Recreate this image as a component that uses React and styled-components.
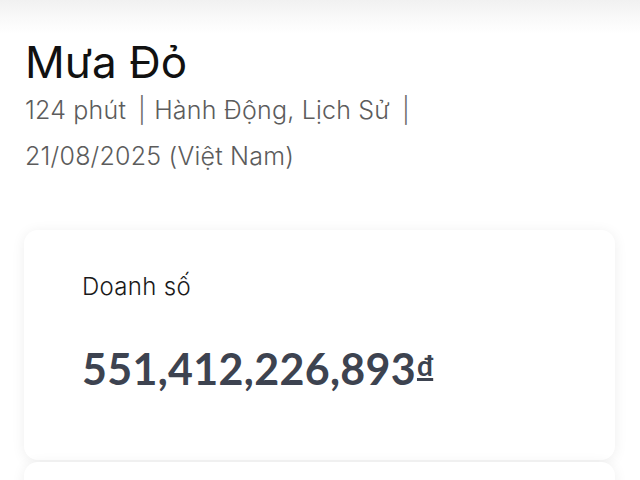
import React from "react";
import styled, { createGlobalStyle } from "styled-components";

const Global = createGlobalStyle`
  html, body { margin: 0; padding: 0; background: #ffffff; }
  body { font-family: Inter, "Noto Sans", sans-serif; }
`;

const Page = styled.div`
  width: 640px;
  height: 480px;
  overflow: hidden;
  background: #ffffff;
  display: flex;
  flex-direction: column;
`;

const TopShade = styled.div`
  height: 34px;
  flex: none;
  background: linear-gradient(to bottom, #f1f1f1 0%, #f8f8f8 45%, #ffffff 100%);
`;

const Info = styled.section`
  padding: 0 26px 0 25px;
  display: flex;
  flex-direction: column;
`;

const Title = styled.h1`
  margin: 0;
  font-size: 44px;
  font-weight: 400;
  line-height: 56px;
  color: #111111;
`;

const MetaLine = styled.div`
  display: flex;
  align-items: baseline;
  font-size: 25px;
  letter-spacing: 0.2px;
  line-height: 48px;
  color: #5c5c5c;
  font-weight: 300;
  white-space: nowrap;
  margin-top: ${(p) => (p.$first ? "-4px" : "-2px")};
`;

const Sep = styled.span`
  margin: 0 8px 0 12px;
  color: #6a6a6a;
`;

const Cards = styled.div`
  margin-top: 50px;
  padding: 0 25px 0 24px;
  display: flex;
  flex-direction: column;
  gap: 2px;
`;

const Card = styled.div`
  background: #ffffff;
  border-radius: 14px;
  box-shadow: 0 2px 14px rgba(0, 0, 0, 0.07);
  height: 230px;
  padding: 41px 58px 0 58px;
  box-sizing: border-box;
  flex: none;
`;

const Label = styled.div`
  font-size: 24px;
  font-weight: 300;
  letter-spacing: 0.3px;
  color: #1a1a1a;
  line-height: 32px;
`;

const Value = styled.div`
  margin-top: 35px;
  font-family: Lato, "Noto Sans", sans-serif;
  font-size: 43px;
  font-weight: 700;
  color: #3d4350;
  line-height: 54px;
  letter-spacing: 0.3px;
`;

const Currency = styled.span`
  font-size: 28px;
  margin-left: 1px;
  vertical-align: 9px;
  text-decoration: underline;
  text-decoration-thickness: 3px;
  text-underline-offset: 2px;
`;

export default function App() {
  return (
    <>
      <Global />
      <Page>
        <TopShade />
        <Info>
          <Title>Mưa Đỏ</Title>
          <MetaLine $first>
            124 phút<Sep>|</Sep>Hành Động, Lịch Sử<Sep>|</Sep>
          </MetaLine>
          <MetaLine>21/08/2025 (Việt Nam)</MetaLine>
        </Info>
        <Cards>
          <Card>
            <Label>Doanh số</Label>
            <Value>
              551,412,226,893<Currency>đ</Currency>
            </Value>
          </Card>
          <Card />
        </Cards>
      </Page>
    </>
  );
}
